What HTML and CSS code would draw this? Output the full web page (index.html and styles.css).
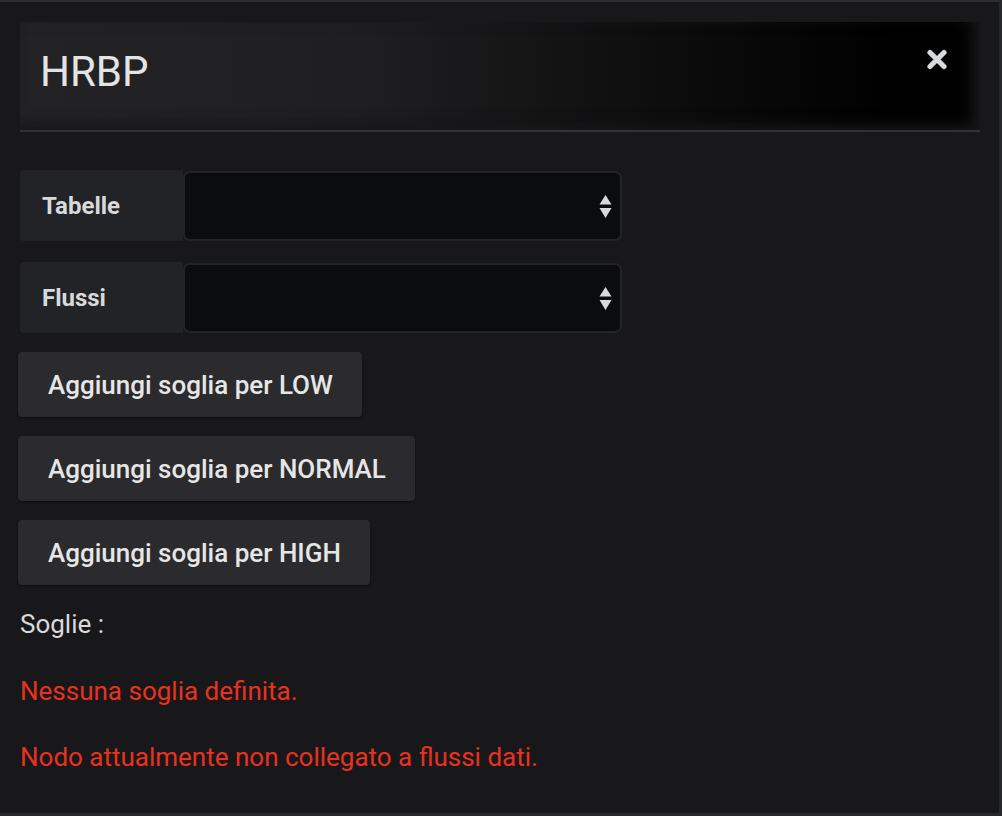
FILE: index.html
```html
<!DOCTYPE html>
<html lang="it">
<head>
<meta charset="utf-8">
<title>HRBP</title>
<link rel="stylesheet" href="styles.css">
</head>
<body>
<div class="modal">
  <header class="modal-header">
    <h2 class="modal-title">HRBP</h2>
    <button class="close" aria-label="Chiudi">
      <svg width="22" height="21" viewBox="0 0 22 21"><path d="M4 3.5 L18 17.5 M18 3.5 L4 17.5" stroke="#d8d9da" stroke-width="5.2" stroke-linecap="round" fill="none"/></svg>
    </button>
  </header>
  <div class="modal-body">
    <div class="field">
      <label class="field-label">Tabelle</label>
      <div class="select"><svg class="caret" width="13" height="24" viewBox="0 0 13 24"><path d="M6.5 0 L12.5 9.5 L0.5 9.5 Z M0.5 13 L12.5 13 L6.5 23 Z" fill="#d8d9da"/></svg></div>
    </div>
    <div class="field">
      <label class="field-label">Flussi</label>
      <div class="select"><svg class="caret" width="13" height="24" viewBox="0 0 13 24"><path d="M6.5 0 L12.5 9.5 L0.5 9.5 Z M0.5 13 L12.5 13 L6.5 23 Z" fill="#d8d9da"/></svg></div>
    </div>
    <div class="actions">
      <button class="btn">Aggiungi soglia per LOW</button>
      <button class="btn">Aggiungi soglia per NORMAL</button>
      <button class="btn">Aggiungi soglia per HIGH</button>
    </div>
    <p class="soglie">Soglie :</p>
    <p class="error first">Nessuna soglia definita.</p>
    <p class="error">Nodo attualmente non collegato a flussi dati.</p>
  </div>
</div>
</body>
</html>
```
FILE: styles.css
```css
html, body {
  margin: 0;
  padding: 0;
  background: #18181a;
}
body {
  font-family: Roboto, "Liberation Sans", sans-serif;
  color: #d8d9da;
}
.modal {
  box-sizing: border-box;
  width: 1002px;
  height: 816px;
  border-top: 2px solid #2b2e32;
  border-right: 3px solid #26282b;
  border-bottom: 3px solid #26292c;
  padding: 20px 19px 0 20px;
  background: #18181a;
}
.modal-header {
  box-sizing: border-box;
  height: 110px;
  display: flex;
  justify-content: space-between;
  align-items: flex-start;
  padding: 0 32px 0 20px;
  border-bottom: 2px solid #323234;
  background: linear-gradient(to right, #232325 0%, #1f1f21 35%, #111112 60%, #060606 80%, #000 92%);
  box-shadow: inset -14px 0 16px -6px #18181a, inset 0 -14px 16px -10px #18181a;
}
.modal-title {
  margin: 25px 0 0 0;
  font-family: Roboto, "Liberation Sans", sans-serif;
  font-weight: 400;
  font-size: 42px;
  line-height: 50px;
  color: #e4e4e4;
}
.close {
  margin-top: 27px;
  padding: 0;
  border: 0;
  background: none;
  width: 22px;
  height: 21px;
  display: block;
}
.close svg { display: block; }
.modal-body {
  padding-top: 38px;
}
.field {
  display: flex;
  align-items: flex-end;
  margin-bottom: 21px;
}
.field:nth-child(2) { margin-bottom: 19px; }
.field-label {
  box-sizing: border-box;
  width: 163px;
  height: 71px;
  display: flex;
  align-items: center;
  padding-left: 22px;
  background: #222326;
  border-radius: 4px 0 0 4px;
  font-weight: 700;
  font-size: 24px;
  color: #d8d9da;
}
.select {
  box-sizing: border-box;
  width: 439px;
  height: 70px;
  background: #0b0c0e;
  border: 2px solid #232427;
  border-radius: 7px;
  display: flex;
  align-items: center;
  justify-content: flex-end;
  padding-right: 8px;
}
.caret { display: block; margin-top: 1px; }
.actions {
  display: flex;
  flex-direction: column;
  align-items: flex-start;
  gap: 19px;
  margin-left: -2px;
}
.btn {
  box-sizing: border-box;
  height: 65px;
  padding: 0 29px 0 30px;
  border: 0;
  border-radius: 4px;
  background: #2b2b2d;
  box-shadow: 0 1px 2px rgba(0, 0, 0, 0.5);
  font-family: Roboto, "Liberation Sans", sans-serif;
  font-weight: 500;
  font-size: 26px;
  color: #e6e6e6;
}
.soglie {
  margin: 24px 0 0 0;
  font-size: 26px;
  line-height: 30px;
  color: #d8d9da;
}
.error {
  margin: 36px 0 0 0;
  font-size: 26px;
  line-height: 30px;
  color: #e8321f;
}
.error.first { margin-top: 37px; }
```
